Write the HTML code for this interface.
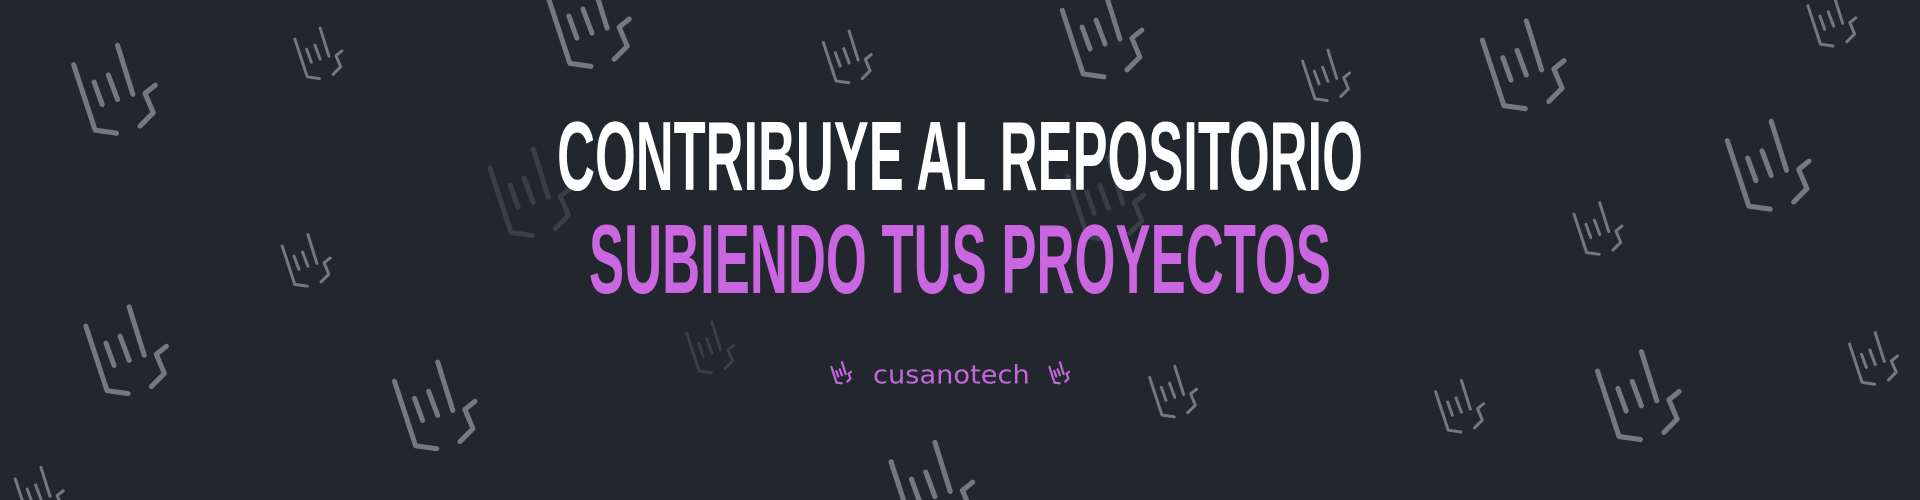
<!DOCTYPE html>
<html><head><meta charset="utf-8"><style>
html,body{margin:0;padding:0;background:#22262d;overflow:hidden;width:1920px;height:500px}
svg{display:block;position:absolute;left:0;top:0}
</style></head><body>
<svg width="1920" height="500" viewBox="0 0 1568 408" preserveAspectRatio="none" xmlns="http://www.w3.org/2000/svg">
<defs>
<symbol id="h" viewBox="10 8 90 96">
<g fill="none" stroke-linecap="round" stroke-linejoin="round" stroke-width="5">
<path d="M15 33 L36 97 L57 100"/>
<path d="M35 50 L43 72"/>
<path d="M49 43 L58 67"/>
<path d="M58 14 L73 62"/>
<path d="M95 53 L85 61 L93 80 L80 93"/>
</g>
</symbol>
<symbol id="hs" viewBox="10 8 90 96">
<g fill="none" stroke-linecap="round" stroke-linejoin="round" stroke-width="9">
<path d="M15 33 L36 97 L57 100"/>
<path d="M35 50 L43 72"/>
<path d="M49 43 L58 67"/>
<path d="M58 14 L73 62"/>
<path d="M95 53 L85 61 L93 80 L80 93"/>
</g>
</symbol>
</defs>
<rect width="1568" height="408" fill="#22262d"/>
<g stroke="#3a3e46">
<use href="#h" x="396" y="116" width="74" height="80"/>
<use href="#h" x="868" y="124" width="70" height="75"/>
<use href="#h" x="558" y="260" width="44" height="46"/>
</g>
<g stroke="#75787e">
<use href="#h" x="56" y="32" width="75" height="80"/>
<use href="#h" x="238" y="20" width="44" height="46"/>
<use href="#h" x="444" y="-22" width="74" height="80"/>
<use href="#h" x="670" y="22" width="44" height="48"/>
<use href="#h" x="862" y="-12" width="76" height="78"/>
<use href="#h" x="1061" y="38" width="44" height="46"/>
<use href="#h" x="1206" y="12" width="76" height="80"/>
<use href="#h" x="1474" y="-8" width="44" height="48"/>
<use href="#h" x="1406" y="94" width="76" height="80"/>
<use href="#h" x="228" y="188" width="44" height="48"/>
<use href="#h" x="1283" y="162" width="44" height="48"/>
<use href="#h" x="66" y="245" width="74" height="80"/>
<use href="#h" x="318" y="290" width="74" height="80"/>
<use href="#h" x="936" y="296" width="44" height="46"/>
<use href="#h" x="1170" y="306" width="44" height="50"/>
<use href="#h" x="1300" y="282" width="76" height="80"/>
<use href="#h" x="1508" y="268" width="44" height="48"/>
<use href="#h" x="10" y="378" width="44" height="48"/>
<use href="#h" x="723" y="356" width="76" height="80"/>
</g>
<g stroke="#c466dc">
<use href="#hs" x="678" y="294" width="18" height="20"/>
<use href="#hs" x="856" y="294" width="18" height="20"/>
</g>
<text x="455" y="155" font-family="Liberation Sans, sans-serif" font-weight="bold" font-size="80" fill="#ffffff" textLength="658" lengthAdjust="spacingAndGlyphs">CONTRIBUYE AL REPOSITORIO</text>
<text x="481" y="239" font-family="Liberation Sans, sans-serif" font-weight="bold" font-size="80" fill="#c966e0" textLength="606" lengthAdjust="spacingAndGlyphs">SUBIENDO TUS PROYECTOS</text>
<text x="713" y="313" font-family="DejaVu Sans, sans-serif" font-size="21" fill="#c467db" textLength="128" lengthAdjust="spacingAndGlyphs">cusanotech</text>
</svg>
</body></html>
